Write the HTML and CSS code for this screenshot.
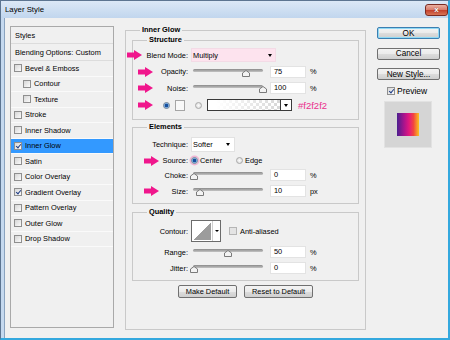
FILE: index.html
```html
<!DOCTYPE html>
<html lang="en">
<head>
    <meta charset="UTF-8">
    <meta name="viewport" content="width=device-width, initial-scale=1.0">
    <title>Layer Style</title>
    <link rel="stylesheet" href="styles.css">
</head>
<body>
    <div class="window">
        <div class="titlebar">
            <span class="title">Layer Style</span>
            <span class="close">x</span>
        </div>
        <div class="content">
            <ul class="styles">
                <li class="head">Styles</li>
                <li class="head">Blending Options: Custom</li>
                <li><span class="check"></span>Bevel &amp; Emboss</li>
                <li class="sub"><span class="check"></span>Contour</li>
                <li class="sub"><span class="check"></span>Texture</li>
                <li><span class="check"></span>Stroke</li>
                <li><span class="check"></span>Inner Shadow</li>
                <li class="selected"><span class="check on"></span>Inner Glow</li>
                <li><span class="check"></span>Satin</li>
                <li><span class="check"></span>Color Overlay</li>
                <li><span class="check on"></span>Gradient Overlay</li>
                <li><span class="check"></span>Pattern Overlay</li>
                <li><span class="check"></span>Outer Glow</li>
                <li><span class="check"></span>Drop Shadow</li>
            </ul>

            <fieldset class="panel">
                <legend>Inner Glow</legend>

                <fieldset class="group structure">
                    <legend>Structure</legend>
                    <div class="rows">
                        <div class="row">
                            <svg class="arrow far" width="15" height="10" viewBox="0 0 15 10"><path d="M0 2.5H7V0L15 5L7 10V7.5H0Z"/></svg>
                            <span class="label">Blend Mode:</span>
                            <span class="select pink blend">Multiply<span class="caret"></span></span>
                        </div>
                        <div class="row">
                            <svg class="arrow" width="15" height="10" viewBox="0 0 15 10"><path d="M0 2.5H7V0L15 5L7 10V7.5H0Z"/></svg>
                            <span class="label">Opacity:</span>
                            <span class="slider"><span class="track"></span><svg class="thumb" style="left: 49px" width="8" height="7" viewBox="0 0 8 7"><path d="M0.5 6.5V3L4 0.5L7.5 3V6.5Z"/></svg></span>
                            <span class="field pink">75</span>
                            <span class="unit">%</span>
                        </div>
                        <div class="row">
                            <svg class="arrow" width="15" height="10" viewBox="0 0 15 10"><path d="M0 2.5H7V0L15 5L7 10V7.5H0Z"/></svg>
                            <span class="label">Noise:</span>
                            <span class="slider"><span class="track"></span><svg class="thumb" style="left: 66px" width="8" height="7" viewBox="0 0 8 7"><path d="M0.5 6.5V3L4 0.5L7.5 3V6.5Z"/></svg></span>
                            <span class="field pink">100</span>
                            <span class="unit">%</span>
                        </div>
                        <div class="row colors">
                            <svg class="arrow" width="15" height="10" viewBox="0 0 15 10"><path d="M0 2.5H7V0L15 5L7 10V7.5H0Z"/></svg>
                            <span class="radio on"></span>
                            <span class="swatch"></span>
                            <span class="radio"></span>
                            <span class="gradient"><span class="drop"><span class="caret"></span></span></span>
                            <span class="hex">#f2f2f2</span>
                        </div>
                    </div>
                </fieldset>

                <fieldset class="group elements">
                    <legend>Elements</legend>
                    <div class="rows">
                        <div class="row">
                            <span class="label">Technique:</span>
                            <span class="select technique">Softer<span class="caret"></span></span>
                        </div>
                        <div class="row">
                            <svg class="arrow mid" width="15" height="10" viewBox="0 0 15 10"><path d="M0 2.5H7V0L15 5L7 10V7.5H0Z"/></svg>
                            <span class="label">Source:</span>
                            <span class="option"><span class="radio on ring"></span>Center</span>
                            <span class="option"><span class="radio"></span>Edge</span>
                        </div>
                        <div class="row">
                            <span class="label">Choke:</span>
                            <span class="slider"><span class="track"></span><svg class="thumb" style="left: -3px" width="8" height="7" viewBox="0 0 8 7"><path d="M0.5 6.5V3L4 0.5L7.5 3V6.5Z"/></svg></span>
                            <span class="field">0</span>
                            <span class="unit">%</span>
                        </div>
                        <div class="row">
                            <svg class="arrow mid" width="15" height="10" viewBox="0 0 15 10"><path d="M0 2.5H7V0L15 5L7 10V7.5H0Z"/></svg>
                            <span class="label">Size:</span>
                            <span class="slider"><span class="track"></span><svg class="thumb" style="left: 3px" width="8" height="7" viewBox="0 0 8 7"><path d="M0.5 6.5V3L4 0.5L7.5 3V6.5Z"/></svg></span>
                            <span class="field pink">10</span>
                            <span class="unit">px</span>
                        </div>
                    </div>
                </fieldset>

                <fieldset class="group quality">
                    <legend>Quality</legend>
                    <div class="rows">
                        <div class="row">
                            <span class="label">Contour:</span>
                            <span class="contour"><span class="curve"></span><span class="drop"><span class="caret small"></span></span></span>
                            <span class="check off"></span>
                            <span>Anti-aliased</span>
                        </div>
                        <div class="row">
                            <span class="label">Range:</span>
                            <span class="slider"><span class="track"></span><svg class="thumb" style="left: 31px" width="8" height="7" viewBox="0 0 8 7"><path d="M0.5 6.5V3L4 0.5L7.5 3V6.5Z"/></svg></span>
                            <span class="field">50</span>
                            <span class="unit">%</span>
                        </div>
                        <div class="row">
                            <span class="label">Jitter:</span>
                            <span class="slider"><span class="track"></span><svg class="thumb" style="left: -3px" width="8" height="7" viewBox="0 0 8 7"><path d="M0.5 6.5V3L4 0.5L7.5 3V6.5Z"/></svg></span>
                            <span class="field">0</span>
                            <span class="unit">%</span>
                        </div>
                    </div>
                </fieldset>

                <div class="actions">
                    <button class="btn make">Make Default</button>
                    <button class="btn reset">Reset to Default</button>
                </div>
            </fieldset>

            <div class="side">
                <button class="btn default">OK</button>
                <button class="btn">Cancel</button>
                <button class="btn">New Style...</button>
                <div class="preview-check"><span class="check on"></span>Preview</div>
                <div class="preview"><div class="preview-swatch"></div></div>
            </div>
        </div>
    </div>
</body>
</html>
```

FILE: styles.css
```css
body {
    margin: 0;
    font-family: "Liberation Sans", Arial, sans-serif;
    font-size: 7.4px;
    color: #000;
}
.window {
    width: 450px;
    height: 340px;
    box-sizing: border-box;
    background: #c5d9ef;
    border-top: 1px solid #5d7591;
    border-left: 1px solid #5d7591;
    border-right: 2px solid #33a8de;
    border-bottom: 2px solid #33a8de;
    display: flex;
    flex-direction: column;
}
.titlebar {
    height: 17px;
    flex: none;
    display: flex;
    align-items: center;
    justify-content: space-between;
    padding-left: 4px;
    background: linear-gradient(#dce8f6, #c1d6ee);
}
.title {
    font-size: 7.8px;
    color: #000;
}
.close {
    width: 23px;
    height: 12px;
    box-sizing: border-box;
    border: 1px solid #7a2b22;
    border-radius: 3px;
    background: linear-gradient(#eab0a2, #d9806f 45%, #c4432f 55%, #d77556);
    color: #fff;
    font-weight: bold;
    font-size: 8px;
    line-height: 9px;
    text-align: center;
    text-shadow: 0 0 1px #5a1a12;
}
.content {
    flex: 1;
    margin-left: 3px;
    border-left: 1px solid #8aa3bf;
    background: #f0f0f0;
    display: flex;
    align-items: flex-start;
    padding-left: 5px;
}

/* styles list */
.styles {
    list-style: none;
    margin: 8px 0 0;
    padding: 0;
    width: 104px;
    height: 302px;
    box-sizing: border-box;
    border: 1px solid #a9a9a9;
    background: #f0f0f0;
    flex: none;
}
.styles li {
    height: 15.5px;
    box-sizing: border-box;
    border-bottom: 1px solid #fafafa;
    display: flex;
    align-items: center;
    padding-left: 3px;
}
.styles li.head {
    height: 17px;
    padding-left: 4px;
    border-bottom-color: #dcdcdc;
}
.styles li.sub {
    padding-left: 12px;
}
.styles li.selected {
    background: #3399ff;
}
.check {
    width: 8px;
    height: 8px;
    box-sizing: border-box;
    border: 1px solid #8f8f8f;
    background: linear-gradient(135deg, #d6d6d6, #fbfbfb);
    margin-right: 3px;
    position: relative;
    flex: none;
}
.check.on::after {
    content: "";
    position: absolute;
    left: 2px;
    top: 0;
    width: 2px;
    height: 4px;
    border: solid #1f3d86;
    border-width: 0 1.3px 1.3px 0;
    transform: rotate(40deg);
}
.check.off {
    margin-left: 8px;
    border-color: #b5b5b5;
    background: #e4e4e4;
}

/* group boxes */
fieldset {
    min-width: 0;
    margin: 0;
    border: 1px solid #c9c9c9;
}
legend {
    font-weight: bold;
    line-height: 10px;
    padding: 0 2px;
}
.panel {
    margin: 7px 0 0 11px;
    padding: 0 6px;
    width: 241px;
    height: 305px;
    box-sizing: border-box;
    flex: none;
}
.panel > legend {
    margin-left: 8px;
}
.group > legend {
    margin-left: 14px;
}
.structure {
    padding: 2px 0 5px;
}
.elements {
    margin-top: 2px;
    padding: 4px 0 2px;
}
.quality {
    margin-top: 3px;
    padding: 3px 0 6px;
}
.rows {
    display: grid;
}
.structure .rows {
    grid-template-rows: 16px 17px 16px 18px;
}
.elements .rows {
    grid-template-rows: 16px 17px 12px 20px;
}
.quality .rows {
    grid-template-rows: 22px 20px 12px;
}
.row {
    display: flex;
    align-items: center;
    position: relative;
}
.label {
    width: 55px;
    text-align: right;
    margin-right: 3px;
    flex: none;
}
.arrow {
    position: absolute;
    left: 5px;
    top: 50%;
    margin-top: -5px;
    fill: #f0168c;
}
.arrow.far {
    left: -6px;
}
.arrow.mid {
    left: 11px;
}

/* controls */
.select {
    height: 14px;
    box-sizing: border-box;
    border: 1px solid #e2e2e2;
    background: #fff;
    display: flex;
    align-items: center;
    justify-content: space-between;
    padding: 0 3px 0 1px;
}
.blend {
    width: 85px;
}
.technique {
    width: 44px;
    height: 15px;
    padding-right: 4px;
}
.pink {
    background: #fde3ee;
    border-color: #f3dbe6;
}
.caret {
    width: 0;
    height: 0;
    border-left: 2.5px solid transparent;
    border-right: 2.5px solid transparent;
    border-top: 3px solid #000;
}
.caret.small {
    border-left-width: 2px;
    border-right-width: 2px;
    border-top-width: 2.5px;
}
.slider {
    width: 70px;
    height: 16px;
    margin: 0 7px 0 2px;
    position: relative;
    flex: none;
}
.track {
    display: block;
    margin-top: 5px;
    height: 3px;
    border-radius: 2px;
    background: linear-gradient(#8a8a8a, #c4c4c4);
}
.thumb {
    position: absolute;
    top: 6px;
    fill: #f3f3f3;
    stroke: #7a7a7a;
    stroke-width: 1;
}
.field {
    width: 36px;
    height: 12px;
    box-sizing: border-box;
    border: 1px solid #e3e3e3;
    background: #fff;
    padding-left: 3px;
    line-height: 10px;
    flex: none;
}
.unit {
    margin-left: 4px;
}
.colors {
    padding-left: 30px;
}
.radio {
    width: 7px;
    height: 7px;
    box-sizing: border-box;
    border-radius: 50%;
    border: 1px solid #a9a9a9;
    background: radial-gradient(circle, #fdfdfd, #d4d4d4);
    flex: none;
}
.radio.on {
    border-color: #6b7f95;
    background: radial-gradient(circle, #17509e 0 1.4px, #6fa6e0 2px, #e9eef5 3px);
}
.radio.ring {
    box-shadow: 0 0 0 1.5px #f1b3d3;
}
.swatch {
    width: 10px;
    height: 11px;
    box-sizing: border-box;
    border: 1px solid #a5a5a5;
    background: #f8f8f8;
    margin: 0 10px 0 5px;
}
.gradient {
    width: 85px;
    height: 12px;
    box-sizing: border-box;
    border: 1px solid #3a3a3a;
    margin-left: 5px;
    display: flex;
    justify-content: flex-end;
    background: linear-gradient(to right, #fff 10%, rgba(255, 255, 255, 0) 90%),
        repeating-conic-gradient(#d6d6d6 0 25%, #fff 0 50%) 0 0 / 6px 6px;
}
.gradient .drop {
    width: 10px;
    border-left: 1px solid #3a3a3a;
    background: #fff;
    display: flex;
    align-items: center;
    justify-content: center;
}
.hex {
    margin-left: 6px;
    font-size: 9.5px;
    color: #ea2f8c;
}
.option {
    display: flex;
    align-items: center;
    width: 45px;
}
.option .radio {
    margin-right: 2px;
}
.contour {
    width: 30px;
    height: 22px;
    box-sizing: border-box;
    border: 1px solid #6b6b6b;
    background: #fff;
    display: flex;
    flex: none;
}
.curve {
    flex: 1;
    margin: 1px;
    background: linear-gradient(to bottom right, #fff 50%, #9c9c9c 50%);
}
.contour .drop {
    width: 7px;
    border-left: 1px solid #d0d0d0;
    display: flex;
    align-items: center;
    justify-content: center;
}

/* buttons */
.btn {
    font: inherit;
    color: #000;
    height: 13px;
    padding: 0;
    border: 1px solid #707070;
    border-radius: 2px;
    background: linear-gradient(#f3f3f3, #ebebeb 50%, #dddddd 51%, #cfcfcf);
    display: flex;
    align-items: center;
    justify-content: center;
}
.actions {
    display: flex;
    justify-content: center;
    gap: 7px;
    margin-top: 4px;
}
.make {
    width: 59px;
}
.reset {
    width: 69px;
}
.side {
    width: 63px;
    margin: 9px 0 0 11px;
    display: flex;
    flex-direction: column;
    flex: none;
}
.side .btn {
    height: 12px;
    font-size: 8.2px;
}
.side .btn + .btn {
    margin-top: 8.5px;
}
.side .btn.default {
    border-color: #3c7fb1;
    box-shadow: inset 0 0 0 1px #8fd9f5;
}
.preview-check {
    margin-top: 4px;
    height: 14px;
    display: flex;
    align-items: center;
    padding-left: 10px;
    font-size: 8.5px;
}
.preview-check .check {
    margin-right: 2px;
}
.preview {
    margin: 3px 0 0 7px;
    width: 48px;
    height: 47px;
    box-sizing: border-box;
    border: 1px solid #e2e2e2;
    background: #d5d5d5;
    display: flex;
    align-items: center;
    justify-content: center;
}
.preview-swatch {
    width: 22px;
    height: 23px;
    background: linear-gradient(to right, #4b1e8f, #b0148c 35%, #e3187e 55%, #f2463f 75%, #fbc21e);
}
```
